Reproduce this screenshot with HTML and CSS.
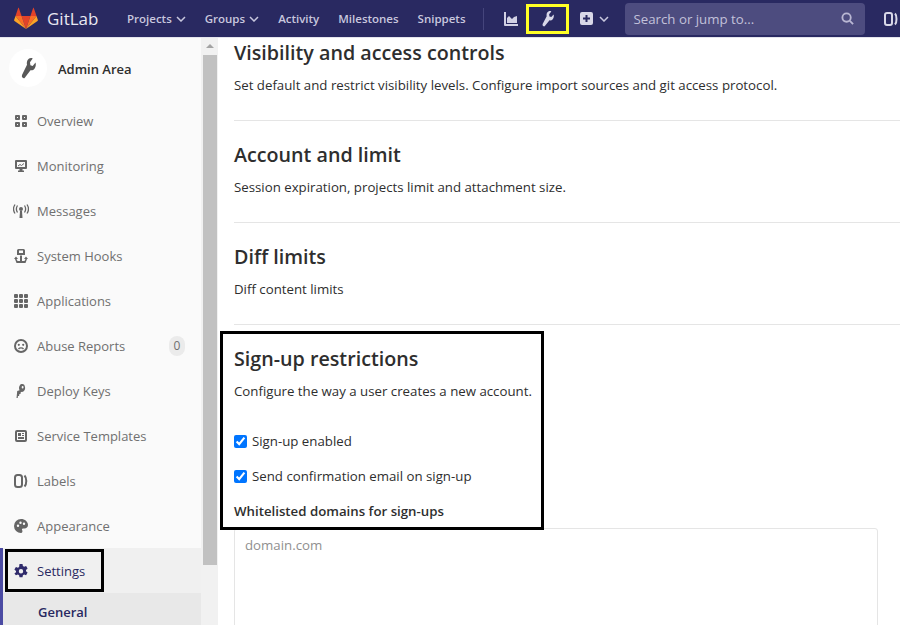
FILE: index.html
```html
<!DOCTYPE html>
<html>
<head>
<title>Admin Area - GitLab</title>
<link rel="stylesheet" href="styles.css">
</head>
<body>

<header class="navbar">
  <a class="brand">
    <svg class="logo" viewBox="0 0 36 36" width="24" height="23" preserveAspectRatio="none">
      <path fill="#e24329" d="M18 34.500 24.600 14H11.400z"/>
      <path fill="#fc6d26" d="M18 34.500 11.400 14H2.200z"/>
      <path fill="#fca326" d="M2.200 14 .2 20.200c-.2.600 0 1.200.500 1.600L18 34.500z"/>
      <path fill="#e24329" d="M2.200 14h9.200L7.400 1.800c-.2-.600-1-.600-1.200 0z"/>
      <path fill="#fc6d26" d="M18 34.500 24.600 14h9.200z"/>
      <path fill="#fca326" d="M33.800 14l2 6.200c.2.600 0 1.200-.500 1.600L18 34.500z"/>
      <path fill="#e24329" d="M33.800 14h-9.200l4-12.200c.2-.600 1-.600 1.200 0z"/>
    </svg>
    <span class="brand-name">GitLab</span>
  </a>
  <nav class="nav-links">
    <a class="nav-link">Projects <svg class="chev" viewBox="0 0 10 6" width="10" height="6"><path d="M1 1l4 4 4-4"/></svg></a>
    <a class="nav-link">Groups <svg class="chev" viewBox="0 0 10 6" width="10" height="6"><path d="M1 1l4 4 4-4"/></svg></a>
    <a class="nav-link">Activity</a>
    <a class="nav-link">Milestones</a>
    <a class="nav-link">Snippets</a>
  </nav>
  <span class="nav-divider"></span>
  <a class="nav-icon chart-icon">
    <svg viewBox="0 0 14 14" width="14" height="14"><path fill="#d1d0e4" d="M0 0h2v12h12v2H1a1 1 0 0 1-1-1z"/><path fill="#d1d0e4" d="M3 11V6l2-2 3 3 2-2 3-1v7z"/></svg>
  </a>
  <a class="nav-icon wrench-box">
    <svg viewBox="0 0 16 16" width="13" height="16" preserveAspectRatio="none"><path fill="#d8d7e8" d="M11 0c.6 0 1.200.1 1.700.4L10 3.200l.4 2.300 2.300.5 2.800-2.600c.2.500.3 1 .3 1.500 0 2.900-2.600 5-5.300 4.400L5 14.800a1.800 1.800 0 0 1-3-1.900L7 5.200C6.300 2.500 8.200 0 11 0z"/></svg>
  </a>
  <a class="nav-icon plus-menu">
    <svg viewBox="0 0 13 13" width="13" height="13"><path fill="#d8d7e8" fill-rule="evenodd" d="M2 0h9a2 2 0 0 1 2 2v9a2 2 0 0 1-2 2H2a2 2 0 0 1-2-2V2a2 2 0 0 1 2-2zm3.500 3v2.500H3v2h2.500V10h2V7.500H10v-2H7.500V3z"/></svg>
    <svg class="chev" viewBox="0 0 10 6" width="10" height="6"><path d="M1 1l4 4 4-4"/></svg>
  </a>
  <div class="search-box">
    <span>Search or jump to...</span>
    <svg viewBox="0 0 14 14" width="13" height="13"><circle cx="6" cy="6" r="4.500" fill="none" stroke="#b9b7d3" stroke-width="2"/><path d="M9.500 9.500 13 13" stroke="#b9b7d3" stroke-width="2"/></svg>
  </div>
  <a class="nav-icon issues-icon">
    <svg viewBox="0 0 14 14" width="14" height="14"><rect x="1" y="1" width="7" height="12" rx="2" fill="none" stroke="#d8d7e8" stroke-width="2"/><path d="M11 1.500c2 2 2 9 0 11" fill="none" stroke="#d8d7e8" stroke-width="2"/></svg>
  </a>
</header>

<div class="page">
  <aside class="sidebar">
    <div class="side-list">
      <div class="side-head">
        <span class="avatar">
          <svg viewBox="0 0 16 16" width="16" height="21" preserveAspectRatio="none"><path fill="#585858" d="M11 0c.6 0 1.200.1 1.700.4L10 3.200l.4 2.300 2.300.5 2.800-2.600c.2.500.3 1 .3 1.500 0 2.900-2.600 5-5.300 4.400L5 14.800a1.800 1.800 0 0 1-3-1.900L7 5.200C6.300 2.500 8.200 0 11 0z"/></svg>
        </span>
        <span class="side-title">Admin Area</span>
      </div>

      <a class="side-item">
        <svg viewBox="0 0 12 12" width="12" height="12"><path fill="#666" fill-rule="evenodd" d="M1 0h3a1 1 0 0 1 1 1v3a1 1 0 0 1-1 1H1a1 1 0 0 1-1-1V1a1 1 0 0 1 1-1zm1 2v1h1V2zM8 0h3a1 1 0 0 1 1 1v3a1 1 0 0 1-1 1H8a1 1 0 0 1-1-1V1a1 1 0 0 1 1-1zm1 2v1h1V2zM1 7h3a1 1 0 0 1 1 1v3a1 1 0 0 1-1 1H1a1 1 0 0 1-1-1V8a1 1 0 0 1 1-1zm1 2v1h1V9zM8 7h3a1 1 0 0 1 1 1v3a1 1 0 0 1-1 1H8a1 1 0 0 1-1-1V8a1 1 0 0 1 1-1zm1 2v1h1V9z"/></svg>
        Overview
      </a>
      <a class="side-item">
        <svg viewBox="0 0 12 12" width="12" height="12"><path fill="#666" fill-rule="evenodd" d="M1 0h10a1 1 0 0 1 1 1v7a1 1 0 0 1-1 1H7.500v1.500H9V12H3v-1.500h1.500V9H1a1 1 0 0 1-1-1V1a1 1 0 0 1 1-1zm1 2v5h8V2z"/><path stroke="#666" fill="none" d="M3 6l2-1.500 1.500 1L9 3.500"/></svg>
        Monitoring
      </a>
      <a class="side-item">
        <svg viewBox="0 0 16 14" width="16" height="14"><circle cx="8" cy="5" r="2" fill="#666"/><path fill="#666" d="M7 7h2l.5 7h-3z"/><path fill="none" stroke="#666" stroke-width="1.300" d="M4.500 1.500c-1.300 2-1.300 5 0 7M11.500 1.500c1.300 2 1.300 5 0 7M2 .5c-2 3-2 6 0 9M14 .5c2 3 2 6 0 9"/></svg>
        Messages
      </a>
      <a class="side-item">
        <svg viewBox="0 0 14 14" width="14" height="14"><path fill="#666" fill-rule="evenodd" d="M4.500 0h5A1.500 1.500 0 0 1 11 1.500V6H3V1.500A1.500 1.500 0 0 1 4.500 0zM5 1.500V4h4V1.500z"/><path fill="#666" d="M6 6.500h2V12h2.500l1-2H10l2-2.500 2 2.500h-1l-1.500 4h-9L1 10H0l2-2.500L4 10H2.500l1 2H6z"/></svg>
        System Hooks
      </a>
      <a class="side-item">
        <svg viewBox="0 0 14 14" width="14" height="14"><g fill="#666"><rect width="4" height="4" rx="1"/><rect x="5" width="4" height="4" rx="1"/><rect x="10" width="4" height="4" rx="1"/><rect y="5" width="4" height="4" rx="1"/><rect x="5" y="5" width="4" height="4" rx="1"/><rect x="10" y="5" width="4" height="4" rx="1"/><rect y="10" width="4" height="4" rx="1"/><rect x="5" y="10" width="4" height="4" rx="1"/><rect x="10" y="10" width="4" height="4" rx="1"/></g></svg>
        Applications
      </a>
      <a class="side-item">
        <svg viewBox="0 0 14 14" width="14" height="14"><circle cx="7" cy="7" r="6" fill="none" stroke="#666" stroke-width="2"/><circle cx="4.800" cy="5.800" r="1.100" fill="#666"/><circle cx="9.200" cy="5.800" r="1.100" fill="#666"/><path d="M4.500 10c1-1.400 4-1.400 5 0" fill="none" stroke="#666" stroke-width="1.300"/></svg>
        <span class="side-label">Abuse Reports</span>
        <span class="badge">0</span>
      </a>
      <a class="side-item">
        <svg viewBox="0 0 14 14" width="14" height="14"><path fill="#666" fill-rule="evenodd" d="M8 0a4 4 0 0 1 1.200 7.800L6 8 5.500 10H4l-.4 2H2l-.3 2H0l1-7 3.300-.7A4 4 0 0 1 8 0zm.5 2a1.300 1.300 0 1 0 0 2.600 1.300 1.300 0 0 0 0-2.600z" transform="translate(2.500 0) scale(.72 1)"/></svg>
        Deploy Keys
      </a>
      <a class="side-item">
        <svg viewBox="0 0 12 12" width="12" height="12"><path fill="#666" fill-rule="evenodd" d="M2 0h8a2 2 0 0 1 2 2v8a2 2 0 0 1-2 2H2a2 2 0 0 1-2-2V2a2 2 0 0 1 2-2zm0 2v8h8V2zm1 5h6v2H3zm0-4h3v3H3zm4 0h2v1H7zm0 2h2v1H7z"/></svg>
        Service Templates
      </a>
      <a class="side-item">
        <svg viewBox="0 0 14 14" width="14" height="14"><rect x="1" y="1" width="7" height="12" rx="2.500" fill="none" stroke="#666" stroke-width="2"/><path d="M10.500 1.500c2.400 2.500 2.400 8.500 0 11" fill="none" stroke="#666" stroke-width="2"/></svg>
        Labels
      </a>
      <a class="side-item">
        <svg viewBox="0 0 14 14" width="14" height="14"><path fill="#666" fill-rule="evenodd" d="M7 0c4 0 7 2.700 7 6 0 2.200-1.700 3.500-3.500 3.500H9c-1 0-1.300 1-.8 1.700.6.800.2 2.800-1.200 2.800A7 7 0 0 1 7 0zM4 5.500a1.200 1.200 0 1 0 0 2.400 1.200 1.200 0 0 0 0-2.400zm2.500-3a1.200 1.200 0 1 0 0 2.400 1.200 1.200 0 0 0 0-2.400zm3.500 1a1.200 1.200 0 1 0 0 2.400 1.200 1.200 0 0 0 0-2.400z"/></svg>
        Appearance
      </a>

      <div class="side-active">
        <a class="side-item settings-item">
          <svg viewBox="0 0 14 14" width="14" height="14"><path fill="#2f2a6b" fill-rule="evenodd" d="M5.500 0h3l.4 2 1.200.7 2-.7 1.500 2.600-1.600 1.300v1.400l1.600 1.300-1.500 2.600-2-.7-1.200.7-.4 2h-3l-.4-2-1.200-.7-2 .7L.4 9.600 2 8.300V6.900L.4 5.600 1.900 3l2 .7 1.200-.7zM7 5a2.200 2.200 0 1 0 0 4.400A2.200 2.200 0 0 0 7 5z"/></svg>
          Settings
        </a>
        <a class="side-sub">General</a>
      </div>
    </div>
    <div class="scrollbar">
      <svg viewBox="0 0 8 4" width="8" height="4"><path fill="#a3a3a3" d="M0 4l4-4 4 4z"/></svg>
      <div class="scroll-thumb"></div>
    </div>
  </aside>

  <main class="content">
    <section class="block first-block">
      <h4>Visibility and access controls</h4>
      <p>Set default and restrict visibility levels. Configure import sources and git access protocol.</p>
    </section>
    <section class="block">
      <h4>Account and limit</h4>
      <p>Session expiration, projects limit and attachment size.</p>
    </section>
    <section class="block">
      <h4>Diff limits</h4>
      <p>Diff content limits</p>
    </section>
    <section class="signup">
      <h4>Sign-up restrictions</h4>
      <p>Configure the way a user creates a new account.</p>
      <label class="check"><input type="checkbox" checked> Sign-up enabled</label>
      <label class="check"><input type="checkbox" checked> Send confirmation email on sign-up</label>
      <label class="field-label">Whitelisted domains for sign-ups</label>
      <div class="domains">domain.com</div>
    </section>
  </main>
</div>

<!-- annotation boxes drawn on top of the screenshot -->
<span class="mark mark-signup"></span>
<span class="mark mark-settings"></span>

</body>
</html>
```

FILE: styles.css
```css
* {
  box-sizing: border-box;
}

html, body {
  height: 100%;
}

body {
  margin: 0;
  overflow: hidden;
  font-family: "Open Sans", "Noto Sans", sans-serif;
  font-size: 13px;
  color: #2e2e2e;
  background-color: white;
}

.navbar {
  display: flex;
  align-items: center;
  height: 38px;
  background-color: #292961;
  border-bottom: 1px solid #e4e4ec;
  padding-left: 14px;
  overflow: hidden;
}

.brand {
  display: flex;
  align-items: center;
  width: 113px;
  flex: none;
}

.logo {
  margin-right: 9px;
}

.brand-name {
  font-size: 17px;
  color: #e8e8f2;
}

.nav-links {
  display: flex;
  gap: 19px;
  flex: none;
}

.nav-link {
  font-size: 11.5px;
  font-weight: 600;
  color: #c8c7de;
}

.chev {
  fill: none;
  stroke: #c8c7de;
  stroke-width: 1.5;
  margin-left: 1px;
  vertical-align: 1px;
}

.nav-divider {
  width: 1px;
  height: 22px;
  background-color: #45457c;
  margin-left: 17px;
  flex: none;
}

.nav-icon {
  display: flex;
  align-items: center;
  flex: none;
}

.chart-icon {
  margin-left: 20px;
}

.wrench-box {
  justify-content: center;
  width: 43px;
  height: 30px;
  margin-left: 8px;
  border: 3px solid #ffff26;
}

.plus-menu {
  gap: 5px;
  margin-left: 11px;
}

.search-box {
  display: flex;
  align-items: center;
  justify-content: space-between;
  width: 240px;
  height: 32px;
  margin-left: 16px;
  padding: 0 11px 0 9px;
  border-radius: 4px;
  background-color: #4d4c7f;
  color: #c2c1da;
  font-size: 13.25px;
  flex: none;
}

.issues-icon {
  margin-left: 19px;
}

.page {
  display: flex;
  height: 587px;
}

.sidebar {
  display: flex;
  width: 218px;
  flex: none;
  background-color: #fafafa;
  overflow: hidden;
}

.side-list {
  width: 201px;
  flex: none;
}

.side-head {
  display: flex;
  align-items: center;
  height: 60px;
  padding-left: 9px;
}

.avatar {
  display: flex;
  align-items: center;
  justify-content: center;
  width: 38px;
  height: 38px;
  margin-right: 11px;
  border-radius: 50%;
  background-color: white;
}

.side-title {
  padding-top: 2px;
  font-size: 13px;
  font-weight: 600;
  color: #2e2e2e;
}

.side-item {
  display: flex;
  align-items: center;
  height: 45px;
  padding-left: 13px;
  color: #707070;
  font-size: 13px;
}

.side-item svg {
  width: 16px;
  margin-right: 8px;
  flex: none;
}

.side-label {
  flex: 1;
}

.badge {
  display: flex;
  align-items: center;
  justify-content: center;
  width: 16px;
  height: 20px;
  margin-right: 16px;
  border-radius: 10px;
  background-color: #ebebeb;
  font-size: 12px;
  color: #707070;
}

.side-active {
  border-left: 3px solid #4b4ba3;
  background-color: #f0f0f0;
}

.settings-item {
  padding-left: 10px;
  color: #292961;
}

.side-sub {
  display: block;
  height: 33px;
  padding: 10px 0 0 35px;
  background-color: #e8e8e8;
  color: #292961;
  font-weight: 600;
  font-size: 13px;
}

.scrollbar {
  width: 17px;
  background-color: #f1f1f1;
  display: flex;
  flex-direction: column;
  align-items: center;
  padding-top: 6px;
}

.scrollbar svg {
  flex: none;
}

.scroll-thumb {
  width: 14px;
  height: 510px;
  margin-top: 7px;
  background-color: #c1c1c1;
}

.content {
  flex: 1;
  padding-left: 16px;
  overflow: hidden;
}

.block {
  height: 102px;
  padding-top: 19px;
  border-bottom: 1px solid #e5e5e5;
}

.first-block {
  height: 83px;
  padding-top: 0;
}

h4 {
  margin: 0;
  font-size: 19.7px;
  font-weight: 600;
  line-height: 30px;
  color: #2e2e2e;
}

.content p {
  margin: 7px 0 0;
  font-size: 13.25px;
  line-height: 20px;
}

.signup {
  padding-top: 19px;
}

.check {
  display: flex;
  align-items: center;
  gap: 5px;
  height: 20px;
  margin-bottom: 15px;
  font-size: 13.25px;
}

.signup p + .check {
  margin-top: 30px;
}

.check input {
  width: 13px;
  height: 13px;
  margin: 0;
  accent-color: #0075ff;
}

.field-label {
  display: block;
  font-weight: 600;
  font-size: 13.25px;
  line-height: 20px;
}

.domains {
  width: 644px;
  height: 120px;
  margin-top: 7px;
  padding: 7px 10px;
  border: 1px solid #e5e5e5;
  border-radius: 3px;
  color: #8f8f8f;
  font-size: 13.25px;
}

.mark {
  position: absolute;
  border: 3px solid black;
}

.mark-signup {
  left: 220px;
  top: 331px;
  width: 324px;
  height: 199px;
}

.mark-settings {
  left: 5px;
  top: 549px;
  width: 99px;
  height: 43px;
}
```
